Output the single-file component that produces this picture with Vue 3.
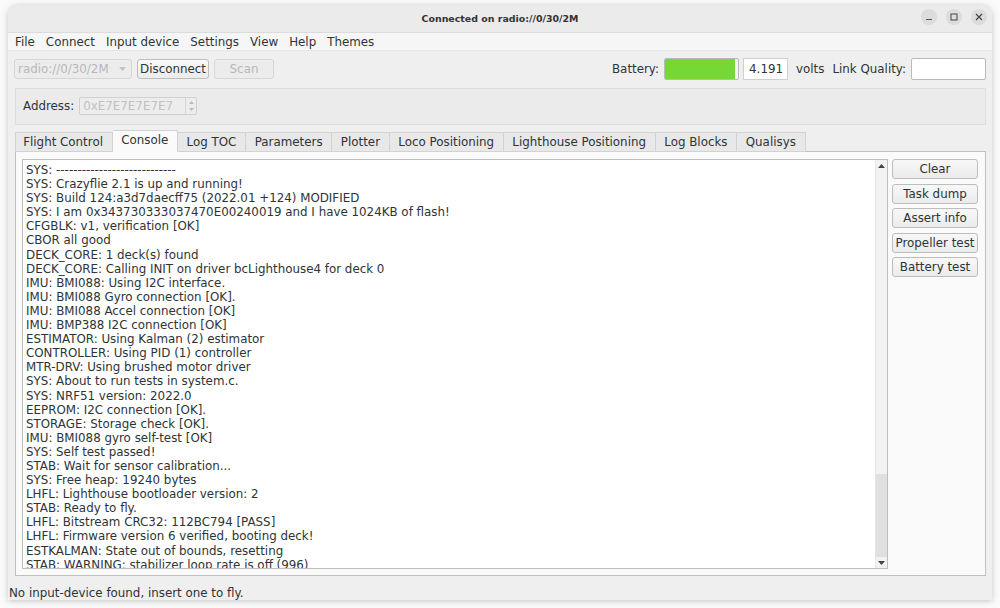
<script setup>
const menus = ['File', 'Connect', 'Input device', 'Settings', 'View', 'Help', 'Themes']
const tabs = ['Flight Control', 'Console', 'Log TOC', 'Parameters', 'Plotter', 'Loco Positioning', 'Lighthouse Positioning', 'Log Blocks', 'Qualisys']
const actions = ['Clear', 'Task dump', 'Assert info', 'Propeller test', 'Battery test']
const lines = [
  'SYS: ----------------------------',
  'SYS: Crazyflie 2.1 is up and running!',
  'SYS: Build 124:a3d7daecff75 (2022.01 +124) MODIFIED',
  'SYS: I am 0x343730333037470E00240019 and I have 1024KB of flash!',
  'CFGBLK: v1, verification [OK]',
  'CBOR all good',
  'DECK_CORE: 1 deck(s) found',
  'DECK_CORE: Calling INIT on driver bcLighthouse4 for deck 0',
  'IMU: BMI088: Using I2C interface.',
  'IMU: BMI088 Gyro connection [OK].',
  'IMU: BMI088 Accel connection [OK]',
  'IMU: BMP388 I2C connection [OK]',
  'ESTIMATOR: Using Kalman (2) estimator',
  'CONTROLLER: Using PID (1) controller',
  'MTR-DRV: Using brushed motor driver',
  'SYS: About to run tests in system.c.',
  'SYS: NRF51 version: 2022.0',
  'EEPROM: I2C connection [OK].',
  'STORAGE: Storage check [OK].',
  'IMU: BMI088 gyro self-test [OK]',
  'SYS: Self test passed!',
  'STAB: Wait for sensor calibration...',
  'SYS: Free heap: 19240 bytes',
  'LHFL: Lighthouse bootloader version: 2',
  'STAB: Ready to fly.',
  'LHFL: Bitstream CRC32: 112BC794 [PASS]',
  'LHFL: Firmware version 6 verified, booting deck!',
  'ESTKALMAN: State out of bounds, resetting',
  'STAB: WARNING: stabilizer loop rate is off (996)',
]
</script>

<template>
  <div class="desktop">
    <div class="window">
      <header class="titlebar">
        <span class="title">Connected on radio://0/30/2M</span>
        <div class="winbtns">
          <span class="winbtn"><svg width="10" height="10" viewBox="0 0 10 10"><path d="M2 7.5h6" stroke="#555" stroke-width="1" /></svg></span>
          <span class="winbtn"><svg width="10" height="10" viewBox="0 0 10 10"><rect x="2" y="2" width="6" height="6" fill="none" stroke="#444" stroke-width="1" /></svg></span>
          <span class="winbtn"><svg width="10" height="10" viewBox="0 0 10 10"><path d="M2 2l6 6M8 2l-6 6" stroke="#444" stroke-width="1.2" /></svg></span>
        </div>
      </header>

      <nav class="menubar">
        <span v-for="m in menus" :key="m" class="menu">{{ m }}</span>
      </nav>

      <section class="toolbar">
        <div class="combo">
          <span>radio://0/30/2M</span>
          <svg width="7" height="4" viewBox="0 0 7 4"><path d="M0 0h7L3.5 4z" fill="#c4c4c4" /></svg>
        </div>
        <button class="btn disconnect">Disconnect</button>
        <button class="btn scan" disabled>Scan</button>
        <div class="spacer"></div>
        <span class="label">Battery:</span>
        <div class="battery"><div class="battery-fill"></div></div>
        <div class="volt">4.191</div>
        <span class="label volts">volts</span>
        <span class="label">Link Quality:</span>
        <div class="link"></div>
      </section>

      <section class="addressbox">
        <span class="label">Address:</span>
        <div class="spin">
          <span class="spin-text">0xE7E7E7E7E7</span>
          <span class="spin-arrows">
            <svg width="5" height="3" viewBox="0 0 5 3"><path d="M0 3h5L2.5 0z" fill="#bbb" /></svg>
            <svg width="5" height="3" viewBox="0 0 5 3"><path d="M0 0h5L2.5 3z" fill="#bbb" /></svg>
          </span>
        </div>
      </section>

      <section class="tabarea">
        <div class="tabs">
          <span v-for="t in tabs" :key="t" class="tab" :class="{ active: t === 'Console' }">{{ t }}</span>
        </div>
        <div class="panel">
          <div class="console">
            <div class="log">
              <div v-for="(l, i) in lines" :key="i" class="line">{{ l }}</div>
            </div>
            <div class="scrollbar">
              <span class="arrow"><svg width="7" height="4" viewBox="0 0 7 4"><path d="M0 4h7L3.5 0z" fill="#444" /></svg></span>
              <div class="track"><div class="thumb"></div></div>
              <span class="arrow"><svg width="7" height="4" viewBox="0 0 7 4"><path d="M0 0h7L3.5 4z" fill="#444" /></svg></span>
            </div>
          </div>
          <div class="actions">
            <button v-for="a in actions" :key="a" class="btn action">{{ a }}</button>
          </div>
        </div>
      </section>

      <footer class="statusbar">No input-device found, insert one to fly.</footer>
    </div>
  </div>
</template>

<style>
html, body { margin: 0; background: #fafafa; }
</style>

<style scoped>
.desktop {
  width: 1000px;
  height: 608px;
  box-sizing: border-box;
  padding: 5px 8px 8px;
  overflow: hidden;
  background: #fafafa;
  font-family: "DejaVu Sans", sans-serif;
  font-size: 11.87px;
  color: #2e3436;
}
.window {
  height: 595px;
  display: flex;
  flex-direction: column;
  background: #efefef;
  border-radius: 11px 11px 0 0;
  box-shadow: 0 1px 6px rgba(0, 0, 0, 0.22);
  overflow: hidden;
}
.titlebar {
  height: 28px;
  flex: none;
  box-sizing: border-box;
  display: flex;
  align-items: center;
  justify-content: center;
  position: relative;
  background: #ebebeb;
  border-bottom: 1px solid #dcdcdc;
}
.title {
  font-size: 9.45px;
  font-weight: 700;
  color: #333;
}
.winbtns {
  position: absolute;
  right: 5px;
  top: 4px;
  display: flex;
  gap: 9px;
}
.winbtn {
  width: 16px;
  height: 16px;
  border-radius: 50%;
  background: #dcdcdc;
  display: flex;
  align-items: center;
  justify-content: center;
}
.menubar {
  height: 18px;
  flex: none;
  box-sizing: border-box;
  display: flex;
  align-items: center;
  padding-left: 7px;
  gap: 11px;
  background: #f6f6f6;
  border-bottom: 1px solid #e6e6e6;
}
.toolbar {
  height: 37px;
  flex: none;
  box-sizing: border-box;
  display: flex;
  align-items: flex-start;
  padding: 8px 6px 0 6px;
}
.combo {
  width: 118px;
  height: 20px;
  box-sizing: border-box;
  display: flex;
  align-items: center;
  justify-content: space-between;
  padding: 0 5px 0 3px;
  color: #b8b8b8;
  background: #ececec;
  border: 1px solid #d6d6d6;
  border-radius: 3px;
}
.btn {
  font: inherit;
  color: inherit;
  padding: 0;
  height: 20px;
  box-sizing: border-box;
  border: 1px solid #bdbdbd;
  border-radius: 3px;
  background: linear-gradient(#f8f8f8, #ebebeb);
}
.disconnect { width: 72px; margin-left: 5px; }
.scan {
  width: 60px;
  margin-left: 5px;
  color: #b8b8b8;
  border-color: #d6d6d6;
  background: #ececec;
}
.spacer { flex: 1; }
.label { line-height: 20px; }
.battery {
  width: 75px;
  height: 22px;
  margin: -1px 4px 0 5px;
  box-sizing: border-box;
  border: 1px solid #b9b9b9;
  border-radius: 2px;
  background: #f4f4f4;
  overflow: hidden;
}
.battery-fill { width: 70px; height: 100%; background: #78d833; }
.volt {
  width: 45px;
  height: 22px;
  margin-top: -1px;
  box-sizing: border-box;
  border: 1px solid #cfcfcf;
  background: #fff;
  text-align: right;
  line-height: 20px;
  padding-right: 4px;
}
.volts { margin: 0 8px; }
.link {
  width: 75px;
  height: 22px;
  margin: -1px 0 0 5px;
  box-sizing: border-box;
  border: 1px solid #b9b9b9;
  border-radius: 2px;
  background: #fff;
}
.addressbox {
  height: 37px;
  flex: none;
  box-sizing: border-box;
  margin: 0 6px 0 7px;
  display: flex;
  align-items: center;
  padding: 0 0 1px 7px;
  gap: 5px;
  background: #ebebeb;
  border: 1px solid #dedede;
}
.spin {
  width: 118px;
  height: 18px;
  box-sizing: border-box;
  display: flex;
  align-items: center;
  justify-content: space-between;
  padding-left: 3px;
  color: #c0c0c0;
  border: 1px solid #d0d0d0;
  border-radius: 2px;
  background: #ededed;
}
.spin-arrows {
  width: 10px;
  height: 100%;
  display: flex;
  flex-direction: column;
  align-items: center;
  justify-content: center;
  gap: 4px;
  border-left: 1px solid #d6d6d6;
}
.tabarea {
  flex: 1;
  display: flex;
  flex-direction: column;
  margin: 6px 6px 0 7px;
  min-height: 0;
}
.tabs {
  display: flex;
  height: 21px;
  flex: none;
  align-items: flex-end;
  position: relative;
  z-index: 1;
  margin-bottom: -1px;
}
.tab {
  height: 20px;
  box-sizing: border-box;
  padding: 0 8.65px;
  line-height: 18px;
  background: #e8e8e8;
  border: 1px solid #d2d2d2;
  border-left: 0;
}
.tab:first-child { border-left: 1px solid #d2d2d2; padding-left: 7.2px; }
.tab.active {
  height: 22px;
  background: #fafafa;
  border-bottom-color: #fafafa;
  line-height: 19px;
  border-radius: 2px 2px 0 0;
}
.panel {
  height: 425px;
  box-sizing: border-box;
  display: flex;
  padding: 7px 7px 6px 6px;
  gap: 4px;
  background: #fafafa;
  border: 1px solid #bfbfbf;
}
.console {
  flex: 1;
  min-width: 0;
  display: flex;
  border: 1px solid #bdbdbd;
  background: #fff;
}
.log {
  flex: 1;
  overflow: hidden;
  padding: 3px 0 0 3px;
  white-space: nowrap;
}
.line { height: 14.1px; line-height: 14.1px; }
.scrollbar {
  width: 11px;
  display: flex;
  flex-direction: column;
  background: #f2f2f2;
  border-left: 1px solid #e6e6e6;
}
.arrow {
  height: 11px;
  flex: none;
  display: flex;
  align-items: center;
  justify-content: center;
}
.track { flex: 1; display: flex; flex-direction: column; justify-content: flex-end; }
.thumb { height: 83px; background: #e0e0e0; }
.actions {
  width: 86px;
  flex: none;
  display: flex;
  flex-direction: column;
  gap: 4.5px;
}
.action { white-space: nowrap; }
.statusbar {
  height: 24px;
  flex: none;
  position: relative;
  padding: 10px 0 0 1px;
  box-sizing: border-box;
  line-height: 14px;
  background: #efefef;
}
.statusbar::after {
  content: "";
  position: absolute;
  right: 0;
  bottom: 0;
  width: 8px;
  height: 8px;
  background-image: radial-gradient(#cfcfcf 45%, transparent 50%);
  background-size: 2px 2px;
}
</style>
